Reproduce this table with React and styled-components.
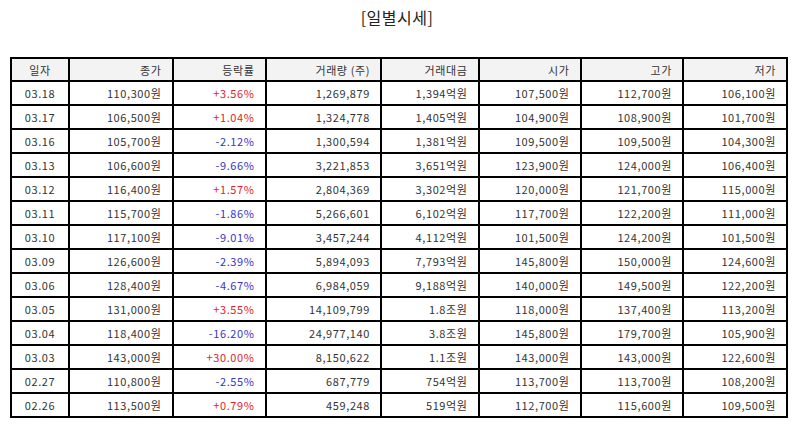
import React from 'react';
import styled, { createGlobalStyle } from 'styled-components';

const GlobalStyle = createGlobalStyle`
  html, body {
    margin: 0;
    padding: 0;
    background: #ffffff;
  }
  body {
    font-family: "Noto Sans CJK KR", "Noto Sans", sans-serif;
    color: #333333;
  }
`;

const Page = styled.div`
  width: 794px;
  padding: 0 0 0 10px;
  box-sizing: border-box;
`;

const Title = styled.h2`
  margin: 0 0 0 -10px;
  height: 57px;
  padding-top: 5px;
  box-sizing: border-box;
  text-align: center;
  font-size: 16px;
  font-weight: 400;
  line-height: 24px;
  letter-spacing: 0.5px;
  color: #222222;
`;

const Table = styled.table`
  width: 776px;
  border-collapse: collapse;
  table-layout: fixed;
  font-size: 11px;
  letter-spacing: 0.6px;
`;

const Th = styled.th`
  height: 21px;
  padding: ${(p) => (p.$center ? '0' : '0 10px 0 0')};
  border: 2px solid #000000;
  background: #f3f3f3;
  font-weight: 400;
  color: #333333;
  text-align: ${(p) => (p.$center ? 'center' : 'right')};
`;

const Td = styled.td`
  height: 22px;
  padding: ${(p) => (p.$center ? '0' : '0 10px 0 0')};
  border: 2px solid #000000;
  color: ${(p) => p.$color || '#333333'};
  text-align: ${(p) => (p.$center ? 'center' : 'right')};
  white-space: nowrap;
`;

const widths = [58, 103.5, 93, 115.5, 97.5, 102, 102.5, 104];
const headers = ['일자', '종가', '등락률', '거래량 (주)', '거래대금', '시가', '고가', '저가'];

const rows = [
  ['03.18', '110,300원', '+3.56%', '1,269,879', '1,394억원', '107,500원', '112,700원', '106,100원'],
  ['03.17', '106,500원', '+1.04%', '1,324,778', '1,405억원', '104,900원', '108,900원', '101,700원'],
  ['03.16', '105,700원', '-2.12%', '1,300,594', '1,381억원', '109,500원', '109,500원', '104,300원'],
  ['03.13', '106,600원', '-9.66%', '3,221,853', '3,651억원', '123,900원', '124,000원', '106,400원'],
  ['03.12', '116,400원', '+1.57%', '2,804,369', '3,302억원', '120,000원', '121,700원', '115,000원'],
  ['03.11', '115,700원', '-1.86%', '5,266,601', '6,102억원', '117,700원', '122,200원', '111,000원'],
  ['03.10', '117,100원', '-9.01%', '3,457,244', '4,112억원', '101,500원', '124,200원', '101,500원'],
  ['03.09', '126,600원', '-2.39%', '5,894,093', '7,793억원', '145,800원', '150,000원', '124,600원'],
  ['03.06', '128,400원', '-4.67%', '6,984,059', '9,188억원', '140,000원', '149,500원', '122,200원'],
  ['03.05', '131,000원', '+3.55%', '14,109,799', '1.8조원', '118,000원', '137,400원', '113,200원'],
  ['03.04', '118,400원', '-16.20%', '24,977,140', '3.8조원', '145,800원', '179,700원', '105,900원'],
  ['03.03', '143,000원', '+30.00%', '8,150,622', '1.1조원', '143,000원', '143,000원', '122,600원'],
  ['02.27', '110,800원', '-2.55%', '687,779', '754억원', '113,700원', '113,700원', '108,200원'],
  ['02.26', '113,500원', '+0.79%', '459,248', '519억원', '112,700원', '115,600원', '109,500원'],
];

const rateColor = (v) => (v.startsWith('+') ? '#e2232e' : '#3535c8');

export default function App() {
  return (
    <Page>
      <GlobalStyle />
      <Title>[일별시세]</Title>
      <Table>
        <colgroup>
          {widths.map((w, i) => (
            <col key={i} style={{ width: w }} />
          ))}
        </colgroup>
        <thead>
          <tr>
            {headers.map((h, i) => (
              <Th key={h} $center={i === 0}>{h}</Th>
            ))}
          </tr>
        </thead>
        <tbody>
          {rows.map((r) => (
            <tr key={r[0]}>
              {r.map((cell, i) => (
                <Td
                  key={i}
                  $center={i === 0}
                  $color={i === 2 ? rateColor(cell) : undefined}
                >
                  {cell}
                </Td>
              ))}
            </tr>
          ))}
        </tbody>
      </Table>
    </Page>
  );
}
